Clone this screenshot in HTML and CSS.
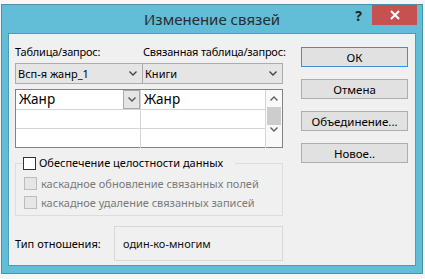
FILE: index.html
```html
<!DOCTYPE html>
<html lang="ru">
<head>
    <meta charset="UTF-8">
    <title>Изменение связей</title>
    <link rel="stylesheet" href="styles.css">
</head>
<body>

    <div class="desktop">
        <div class="dialog">
            <div class="titlebar">
                <span></span>
                <div class="title">Изменение связей</div>
                <div class="controls">
                    <span class="help">?</span>
                    <span class="close">
                        <svg width="10" height="10" viewBox="0 0 10 10"><path d="M1 1 L9 9 M9 1 L1 9" stroke="#fff" stroke-width="2"/></svg>
                    </span>
                </div>
            </div>

            <div class="content">
                <div class="main">
                    <div class="pick">
                        <div class="pick-label">Таблица/запрос:</div>
                        <div class="pick-label">Связанная таблица/запрос:</div>
                        <div class="combo">
                            <span>Всп-я жанр_1</span>
                            <svg class="chev" width="8" height="5" viewBox="0 0 8 5"><path d="M0.5 0.5 L4 4 L7.5 0.5" fill="none" stroke="#444" stroke-width="1.4"/></svg>
                        </div>
                        <div class="combo combo-right">
                            <span>Книги</span>
                            <svg class="chev" width="8" height="5" viewBox="0 0 8 5"><path d="M0.5 0.5 L4 4 L7.5 0.5" fill="none" stroke="#444" stroke-width="1.4"/></svg>
                        </div>
                    </div>

                    <div class="fields">
                        <div class="rows">
                            <div class="row row-first">
                                <div class="cell">
                                    <span>Жанр</span>
                                    <span class="cell-drop">
                                        <svg width="8" height="5" viewBox="0 0 8 5"><path d="M0.5 0.5 L4 4 L7.5 0.5" fill="none" stroke="#555" stroke-width="1.4"/></svg>
                                    </span>
                                </div>
                                <div class="cell">Жанр</div>
                            </div>
                            <div class="row">
                                <div class="cell"></div>
                                <div class="cell"></div>
                            </div>
                            <div class="row row-last">
                                <div class="cell"></div>
                                <div class="cell"></div>
                            </div>
                        </div>
                        <div class="scrollbar">
                            <div class="arrow">
                                <svg width="8" height="5" viewBox="0 0 8 5"><path d="M0.5 4.5 L4 1 L7.5 4.5" fill="none" stroke="#606060" stroke-width="1.4"/></svg>
                            </div>
                            <div class="thumb"></div>
                            <div class="arrow arrow-down">
                                <svg width="8" height="5" viewBox="0 0 8 5"><path d="M0.5 0.5 L4 4 L7.5 0.5" fill="none" stroke="#606060" stroke-width="1.4"/></svg>
                            </div>
                        </div>
                    </div>

                    <fieldset class="integrity">
                        <legend><span class="check"></span>Обеспечение целостности данных</legend>
                        <div class="option"><span class="check check-off"></span>каскадное обновление связанных полей</div>
                        <div class="option"><span class="check check-off"></span>каскадное удаление связанных записей</div>
                    </fieldset>

                    <div class="relation">
                        <div class="relation-label">Тип отношения:</div>
                        <div class="relation-box">один-ко-многим</div>
                    </div>
                </div>

                <div class="buttons">
                    <button class="btn btn-default">ОК</button>
                    <button class="btn">Отмена</button>
                    <button class="btn">Объединение...</button>
                    <button class="btn">Новое..</button>
                </div>
            </div>
        </div>
    </div>

</body>
</html>
```

FILE: styles.css
```css
body {
    margin: 0;
    background-color: #f6f6f6;
    font-family: "Noto Sans", sans-serif;
    font-size: 11px;
    color: #000;
}
.desktop {
    height: 279px;
    padding: 4px 0 0 1px;
    box-sizing: border-box;
    overflow: hidden;
}
.dialog {
    width: 422px;
    height: 270px;
    box-sizing: border-box;
    border: 1px solid #4793aa;
    background: #62bdd6;
    padding: 0 6px 7px;
    display: flex;
    flex-direction: column;
}
.titlebar {
    height: 28px;
    margin: 0 -6px;
    display: grid;
    grid-template-columns: 1fr auto 1fr;
}
.title {
    font-size: 15px;
    line-height: 29px;
    color: #2c2c2c;
}
.controls {
    justify-self: end;
    align-self: start;
    display: flex;
    margin-right: 5px;
}
.help {
    font-size: 14px;
    font-weight: bold;
    line-height: 20px;
    color: #222;
    margin: 1px 10px 0 0;
}
.close {
    width: 45px;
    height: 20px;
    background: #c75050;
    display: flex;
    align-items: center;
    justify-content: center;
}
.content {
    height: 233px;
    box-sizing: border-box;
    border: 1px solid #4f9bb3;
    background: #f0f0f0;
    padding: 10px 7px 0 6px;
    display: grid;
    grid-template-columns: 268px 107px;
    column-gap: 18px;
    align-items: start;
}
.main {
    display: flex;
    flex-direction: column;
}
.pick {
    display: grid;
    grid-template-columns: 128px 140px;
    row-gap: 3px;
}
.pick-label {
    line-height: 16px;
    white-space: nowrap;
    letter-spacing: -0.2px;
}
.combo {
    height: 21px;
    box-sizing: border-box;
    border: 1px solid #acacac;
    background: #e5e5e5;
    display: flex;
    align-items: center;
    justify-content: space-between;
    padding: 0 5px 0 2px;
}
.combo-right {
    border-left: none;
}
.fields {
    margin-top: 5px;
    height: 59px;
    box-sizing: border-box;
    border: 1px solid #828282;
    background: #fff;
    display: flex;
}
.rows {
    width: 250px;
}
.row {
    display: flex;
    height: 19px;
    box-sizing: border-box;
    border-bottom: 1px solid #d5d5d5;
}
.row-first {
    height: 20px;
}
.row-last {
    border-bottom: none;
}
.cell {
    width: 125px;
    box-sizing: border-box;
    border-right: 1px solid #d5d5d5;
    padding-left: 3px;
    font-size: 13.5px;
    line-height: 19px;
    display: flex;
    justify-content: space-between;
}
.cell-drop {
    width: 17px;
    box-sizing: border-box;
    border: 1px solid #a9a9a9;
    background: #e5e5e5;
    display: flex;
    align-items: center;
    justify-content: center;
}
.scrollbar {
    width: 16px;
    background: #f9f9f9;
    display: flex;
    flex-direction: column;
    align-items: center;
}
.arrow {
    height: 17px;
    display: flex;
    align-items: center;
    justify-content: center;
}
.arrow-down {
    height: 8px;
}
.thumb {
    width: 14px;
    height: 18px;
    background: #cdcdcd;
}
.integrity {
    margin: 7px 0 0;
    padding: 3px 0 3px 7px;
    border: 1px solid #dcdcdc;
    min-width: 0;
}
.integrity legend {
    padding: 0 12px 0 0;
    line-height: 16px;
    display: flex;
    align-items: center;
}
.check {
    width: 13px;
    height: 13px;
    box-sizing: border-box;
    border: 1px solid #333;
    background: #fff;
    margin-right: 3px;
}
.option {
    height: 19px;
    display: flex;
    align-items: center;
    padding-left: 1px;
    color: #7a7a7a;
}
.check-off {
    border-color: #bcbcbc;
    background: #e6e6e6;
    margin-right: 4px;
}
.relation {
    margin-top: 10px;
    display: flex;
    align-items: center;
}
.relation-label {
    width: 99px;
}
.relation-box {
    flex: 1;
    height: 35px;
    box-sizing: border-box;
    border: 1px solid #d9d9d9;
    padding-left: 8px;
    display: flex;
    align-items: center;
    color: #111;
}
.buttons {
    margin-top: 3px;
    display: flex;
    flex-direction: column;
    gap: 12px;
}
.btn {
    height: 20px;
    padding: 0;
    border: 1px solid #adadad;
    background: #e1e1e1;
    font-family: "Noto Sans", sans-serif;
    font-size: 11.5px;
    color: #000;
}
.btn-default {
    border-color: #3c8ee0;
}
```
